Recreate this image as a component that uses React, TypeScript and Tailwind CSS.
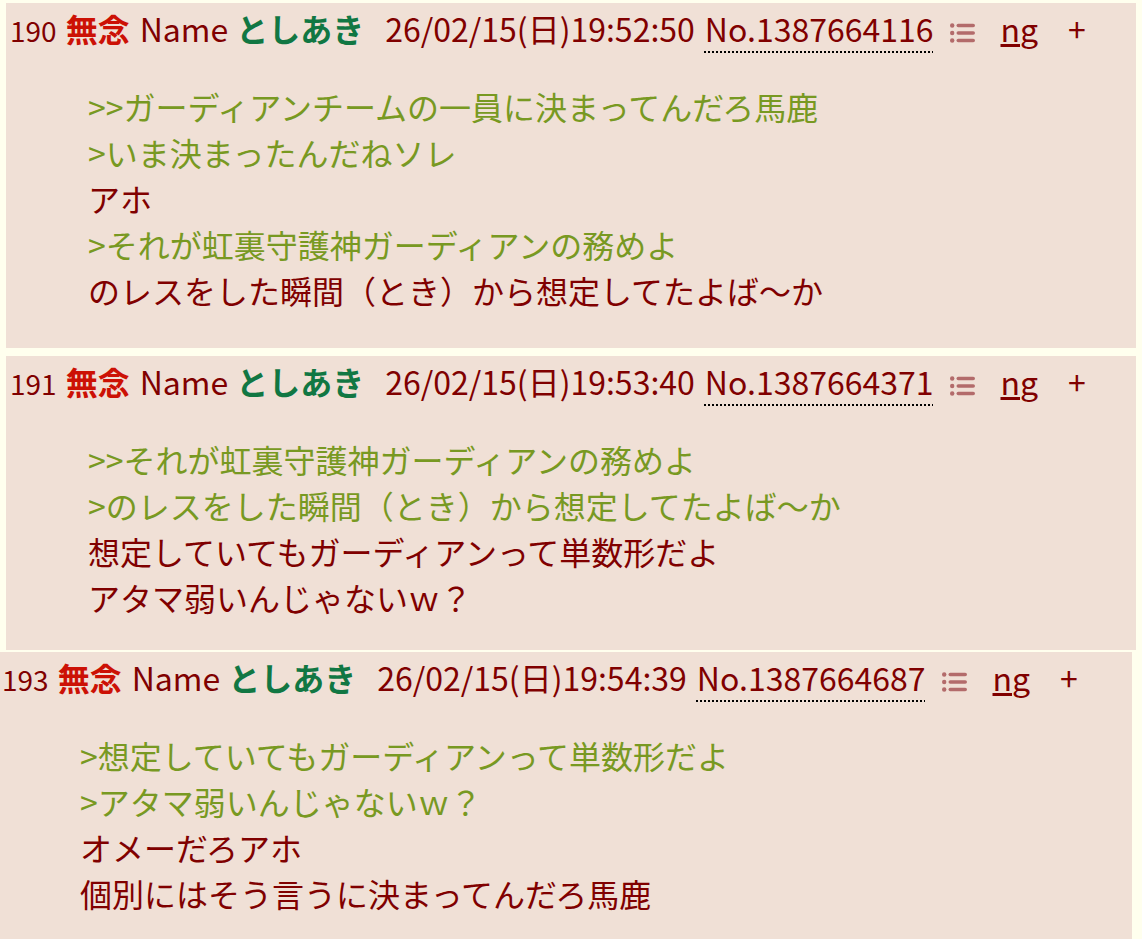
import React from "react";

type Line = { text: string; quote?: boolean };

interface Post {
  no: string;
  date: string;
  id: string;
  lines: Line[];
  box: string;
  head: string;
  body: string;
}

const posts: Post[] = [
  {
    no: "190",
    date: "26/02/15(日)19:52:50",
    id: "No.1387664116",
    box: "mt-[3px] ml-[6px] w-[1130px] pb-[35px]",
    head: "pl-[4px]",
    body: "pl-[82px]",
    lines: [
      { text: ">>ガーディアンチームの一員に決まってんだろ馬鹿", quote: true },
      { text: ">いま決まったんだねソレ", quote: true },
      { text: "アホ" },
      { text: ">それが虹裏守護神ガーディアンの務めよ", quote: true },
      { text: "のレスをした瞬間（とき）から想定してたよば〜か" },
    ],
  },
  {
    no: "191",
    date: "26/02/15(日)19:53:40",
    id: "No.1387664371",
    box: "mt-[8px] ml-[6px] w-[1130px] pb-[30px]",
    head: "pl-[4px]",
    body: "pl-[82px]",
    lines: [
      { text: ">>それが虹裏守護神ガーディアンの務めよ", quote: true },
      { text: ">のレスをした瞬間（とき）から想定してたよば〜か", quote: true },
      { text: "想定していてもガーディアンって単数形だよ" },
      { text: "アタマ弱いんじゃないｗ？" },
    ],
  },
  {
    no: "193",
    date: "26/02/15(日)19:54:39",
    id: "No.1387664687",
    box: "mt-[2px] ml-0 w-[1132px] pb-[40px]",
    head: "pl-[2px]",
    body: "pl-[80px]",
    lines: [
      { text: ">想定していてもガーディアンって単数形だよ", quote: true },
      { text: ">アタマ弱いんじゃないｗ？", quote: true },
      { text: "オメーだろアホ" },
      { text: "個別にはそう言うに決まってんだろ馬鹿" },
    ],
  },
];

const MenuIcon = () => (
  <svg width="25" height="20" viewBox="0 0 25 20">
    <circle cx="2.2" cy="2.5" r="2.2" fill="#b36b6b" />
    <circle cx="2.2" cy="10" r="2.2" fill="#b36b6b" />
    <circle cx="2.2" cy="17.5" r="2.2" fill="#b36b6b" />
    <rect x="6.5" y="0.7" width="18.5" height="3.6" rx="1.8" fill="#b36b6b" />
    <rect x="6.5" y="8.2" width="18.5" height="3.6" rx="1.8" fill="#b36b6b" />
    <rect x="6.5" y="15.7" width="18.5" height="3.6" rx="1.8" fill="#b36b6b" />
  </svg>
);

const PostBox = ({ post }: { post: Post }) => (
  <div className={`bg-[#f0e0d6] pt-[2px] ${post.box}`}>
    <div className={`flex items-baseline h-[46px] leading-[46px] text-[32px] text-[#800000] whitespace-nowrap ${post.head}`}>
      <span className="text-[28px]">{post.no}</span>
      <span className="ml-[9px] font-bold text-[#cc1105]">無念</span>
      <span className="ml-[10px]">Name</span>
      <span className="ml-[8px] font-bold text-[#117743]">としあき</span>
      <span className="ml-[21px]">{post.date}</span>
      <span className="ml-[10px] underline decoration-dotted decoration-black decoration-2 underline-offset-[9px]">{post.id}</span>
      <span className="ml-[16px] self-start mt-[18px] flex"><MenuIcon /></span>
      <span className="ml-[26px]">
        <span className="underline decoration-[3px] underline-offset-[2px]">n</span>g
      </span>
      <span className="ml-[30px]">+</span>
    </div>
    <div className={`mt-[32px] text-[32px] leading-[46px] ${post.body}`}>
      {post.lines.map((l, i) => (
        <div key={i} className={l.quote ? "text-[#789922]" : "text-[#800000]"}>
          {l.text}
        </div>
      ))}
    </div>
  </div>
);

export default function App() {
  return (
    <div className="min-h-screen bg-[#ffffee] font-['Noto_Sans_CJK_JP',sans-serif] overflow-hidden">
      {posts.map((p) => (
        <PostBox key={p.no} post={p} />
      ))}
    </div>
  );
}
